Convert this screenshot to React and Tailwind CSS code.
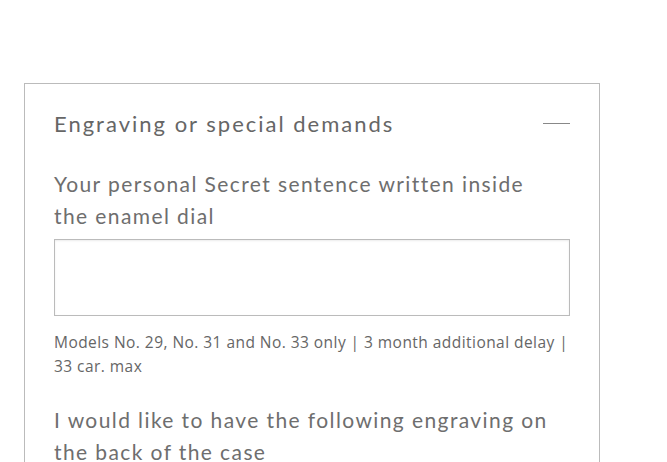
export default function App() {
  return (
    <main className="min-h-screen bg-white pt-[83px] pl-[24px] font-['Lato','Open_Sans',sans-serif] text-[#666]">
      <section className="w-[576px] border border-b-0 border-[#bbb] px-[29px] pb-10">
        <div className="flex items-center justify-between h-[78px]">
          <h2 className="text-[22px] tracking-[2px] text-[#666]">Engraving or special demands</h2>
          <span className="block w-[27px] h-px bg-[#888]" />
        </div>

        <div className="mt-[6px]">
          <label className="block pr-[24px] text-[21px] leading-[32px] tracking-[1.4px] text-[#6e6e6e]">
            Your personal Secret sentence written inside the enamel dial
          </label>
          <textarea className="mt-[7px] block w-full h-[77px] border border-[#bbb] shadow-[inset_0_1px_2px_rgba(0,0,0,0.08)] outline-none resize-none" />
          <p className="mt-[14px] text-[15.5px] leading-[24px] tracking-[0.45px] font-['Open_Sans',sans-serif] text-[#666]">
            Models No. 29, No. 31 and No. 33 only | 3 month additional delay | 33 car. max
          </p>
        </div>

        <label className="mt-[26px] block pr-[10px] text-[21px] leading-[32px] tracking-[1.4px] text-[#6e6e6e]">
          I would like to have the following engraving on the back of the case
        </label>
      </section>
    </main>
  );
}
